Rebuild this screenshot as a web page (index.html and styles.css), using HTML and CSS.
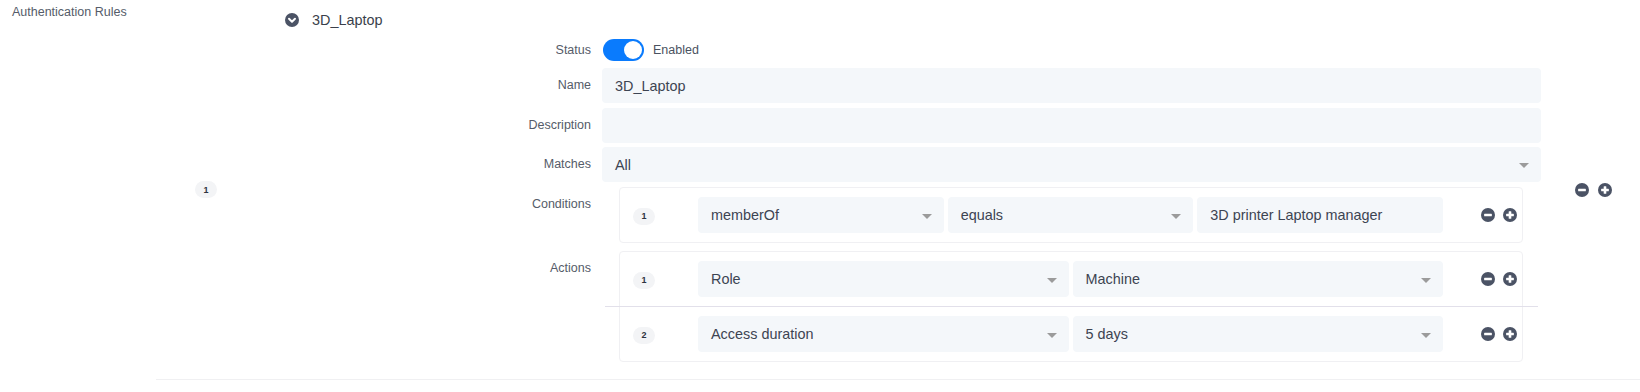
FILE: index.html
```html
<!DOCTYPE html>
<html>
<head>
    <title>Authentication Rules</title>
    <link rel="stylesheet" href="styles.css">
</head>
<body>
    <div class="page">
        <div class="page-label">Authentication Rules</div>

        <div class="rule-list">
            <div class="rule">
                <div class="rule-index"><span class="badge">1</span></div>

                <div class="rule-body">
                    <div class="rule-header">
                        <svg class="icon" viewBox="0 0 16 16"><circle cx="8" cy="8" r="8" fill="#4b5365"/><path d="M4.6 6.6 L8 10 L11.4 6.6" fill="none" stroke="#fff" stroke-width="2.3" stroke-linecap="round" stroke-linejoin="round"/></svg>
                        <span class="rule-title">3D_Laptop</span>
                    </div>

                    <div class="form-row status-row">
                        <label class="form-label">Status</label>
                        <div class="form-control">
                            <span class="switch"><span class="knob"></span></span>
                            <span class="switch-text">Enabled</span>
                        </div>
                    </div>

                    <div class="form-row">
                        <label class="form-label">Name</label>
                        <div class="form-control"><div class="input">3D_Laptop</div></div>
                    </div>

                    <div class="form-row">
                        <label class="form-label">Description</label>
                        <div class="form-control"><div class="input"></div></div>
                    </div>

                    <div class="form-row matches-row">
                        <label class="form-label">Matches</label>
                        <div class="form-control"><div class="input select"><span>All</span><span class="caret"></span></div></div>
                    </div>

                    <div class="form-row top">
                        <label class="form-label">Conditions</label>
                        <div class="form-control">
                            <div class="list-box">
                                <div class="list-row">
                                    <div class="list-index"><span class="badge">1</span></div>
                                    <div class="list-fields three">
                                        <div class="input select"><span>memberOf</span><span class="caret"></span></div>
                                        <div class="input select"><span>equals</span><span class="caret"></span></div>
                                        <div class="input">3D printer Laptop manager</div>
                                    </div>
                                    <div class="list-buttons">
                                        <svg class="icon" viewBox="0 0 16 16"><circle cx="8" cy="8" r="8" fill="#4b5365"/><rect x="3.6" y="6.5" width="8.8" height="3" rx="0.6" fill="#fff"/></svg>
                                        <svg class="icon" viewBox="0 0 16 16"><circle cx="8" cy="8" r="8" fill="#4b5365"/><rect x="3.6" y="6.5" width="8.8" height="3" rx="0.6" fill="#fff"/><rect x="6.5" y="3.6" width="3" height="8.8" rx="0.6" fill="#fff"/></svg>
                                    </div>
                                </div>
                            </div>
                        </div>
                    </div>

                    <div class="form-row top">
                        <label class="form-label">Actions</label>
                        <div class="form-control">
                            <div class="list-box">
                                <div class="list-row">
                                    <div class="list-index"><span class="badge">1</span></div>
                                    <div class="list-fields two">
                                        <div class="input select"><span>Role</span><span class="caret"></span></div>
                                        <div class="input select"><span>Machine</span><span class="caret"></span></div>
                                    </div>
                                    <div class="list-buttons">
                                        <svg class="icon" viewBox="0 0 16 16"><circle cx="8" cy="8" r="8" fill="#4b5365"/><rect x="3.6" y="6.5" width="8.8" height="3" rx="0.6" fill="#fff"/></svg>
                                        <svg class="icon" viewBox="0 0 16 16"><circle cx="8" cy="8" r="8" fill="#4b5365"/><rect x="3.6" y="6.5" width="8.8" height="3" rx="0.6" fill="#fff"/><rect x="6.5" y="3.6" width="3" height="8.8" rx="0.6" fill="#fff"/></svg>
                                    </div>
                                </div>
                                <div class="list-divider"></div>
                                <div class="list-row">
                                    <div class="list-index"><span class="badge">2</span></div>
                                    <div class="list-fields two">
                                        <div class="input select"><span>Access duration</span><span class="caret"></span></div>
                                        <div class="input select"><span>5 days</span><span class="caret"></span></div>
                                    </div>
                                    <div class="list-buttons">
                                        <svg class="icon" viewBox="0 0 16 16"><circle cx="8" cy="8" r="8" fill="#4b5365"/><rect x="3.6" y="6.5" width="8.8" height="3" rx="0.6" fill="#fff"/></svg>
                                        <svg class="icon" viewBox="0 0 16 16"><circle cx="8" cy="8" r="8" fill="#4b5365"/><rect x="3.6" y="6.5" width="8.8" height="3" rx="0.6" fill="#fff"/><rect x="6.5" y="3.6" width="3" height="8.8" rx="0.6" fill="#fff"/></svg>
                                    </div>
                                </div>
                            </div>
                        </div>
                    </div>
                </div>

                <div class="rule-actions">
                    <svg class="icon" viewBox="0 0 16 16"><circle cx="8" cy="8" r="8" fill="#4b5365"/><rect x="3.6" y="6.5" width="8.8" height="3" rx="0.6" fill="#fff"/></svg>
                    <svg class="icon" viewBox="0 0 16 16"><circle cx="8" cy="8" r="8" fill="#4b5365"/><rect x="3.6" y="6.5" width="8.8" height="3" rx="0.6" fill="#fff"/><rect x="6.5" y="3.6" width="3" height="8.8" rx="0.6" fill="#fff"/></svg>
                </div>
            </div>
        </div>
    </div>
</body>
</html>
```

FILE: styles.css
```css
body {
    font-family: "Liberation Sans", Arial, sans-serif;
    background-color: #ffffff;
    color: #3d4452;
    margin: 0;
}

.page {
    display: flex;
}

.page-label {
    width: 144px;
    padding: 5px 0 0 12px;
    font-size: 12.5px;
    line-height: 15px;
    color: #555c69;
}

.rule-list {
    flex: 1;
}

.rule {
    display: flex;
    align-items: center;
    border-bottom: 1px solid #f0f0f2;
}

.rule-index {
    width: 100px;
    display: flex;
    justify-content: center;
}

.badge {
    display: inline-flex;
    align-items: center;
    justify-content: center;
    width: 22px;
    height: 17px;
    border-radius: 9px;
    background-color: #f3f4f6;
    font-size: 9px;
    font-weight: bold;
    color: #2d3340;
}

.rule-body {
    width: 1256px;
    padding: 0 0 17px 29px;
}

.rule-header {
    display: flex;
    align-items: center;
    height: 39px;
}

.icon {
    width: 14px;
    height: 14px;
    display: block;
}

.rule-title {
    margin-left: 13px;
    font-size: 14.4px;
    color: #3a3f4b;
}

.rule-actions {
    flex: 1;
    display: flex;
    gap: 9px;
    padding-left: 34px;
}

.form-row {
    display: flex;
    align-items: center;
    margin-bottom: 4.5px;
}

.form-row.top {
    align-items: flex-start;
    margin-bottom: 8px;
}

.form-row:last-child {
    margin-bottom: 0;
}

.status-row {
    margin-bottom: 7px;
}

.matches-row {
    margin-bottom: 5px;
}

.form-label {
    width: 306px;
    margin-right: 11px;
    text-align: right;
    font-size: 12.5px;
    line-height: 15px;
    color: #555c69;
}

.form-row.top .form-label {
    padding-top: 10px;
}

.form-control {
    flex: 1;
    display: flex;
    align-items: center;
}

.switch {
    display: flex;
    justify-content: flex-end;
    width: 41px;
    height: 22px;
    margin-left: 1px;
    padding: 2px;
    box-sizing: border-box;
    border-radius: 11px;
    background-color: #0a7bfd;
}

.knob {
    width: 18px;
    height: 18px;
    border-radius: 50%;
    background-color: #ffffff;
}

.switch-text {
    margin-left: 9px;
    font-size: 12.5px;
    color: #4a5260;
}

.input {
    display: flex;
    align-items: center;
    flex: 1;
    height: 35px;
    padding: 0 12px 0 13px;
    border-radius: 4px;
    background-color: #f4f7fa;
    font-size: 14.4px;
    color: #3d4452;
}

.select {
    justify-content: space-between;
}

.caret {
    width: 0;
    height: 0;
    border-left: 5px solid transparent;
    border-right: 5px solid transparent;
    border-top: 5px solid #9b9b9b;
    margin-top: 2px;
}

.list-box {
    flex: 1;
    margin: 0 18px 0 17px;
    border: 1px solid #f0f0f3;
    border-radius: 4px;
}

.list-row {
    display: flex;
    align-items: center;
    padding: 9px 5px 9px 13px;
}

.list-index {
    width: 65px;
}

.list-fields {
    flex: 1;
    display: grid;
    gap: 4px;
}

.list-fields.three {
    grid-template-columns: 1fr 1fr 1fr;
}

.list-fields.two {
    grid-template-columns: 1fr 1fr;
}

.list-fields .input {
    height: 36px;
}

.list-buttons {
    width: 74px;
    display: flex;
    justify-content: flex-end;
    gap: 8px;
}

.list-divider {
    height: 1px;
    margin: 0 -16px 0 -15px;
    background-color: #e2e0ea;
}
```
